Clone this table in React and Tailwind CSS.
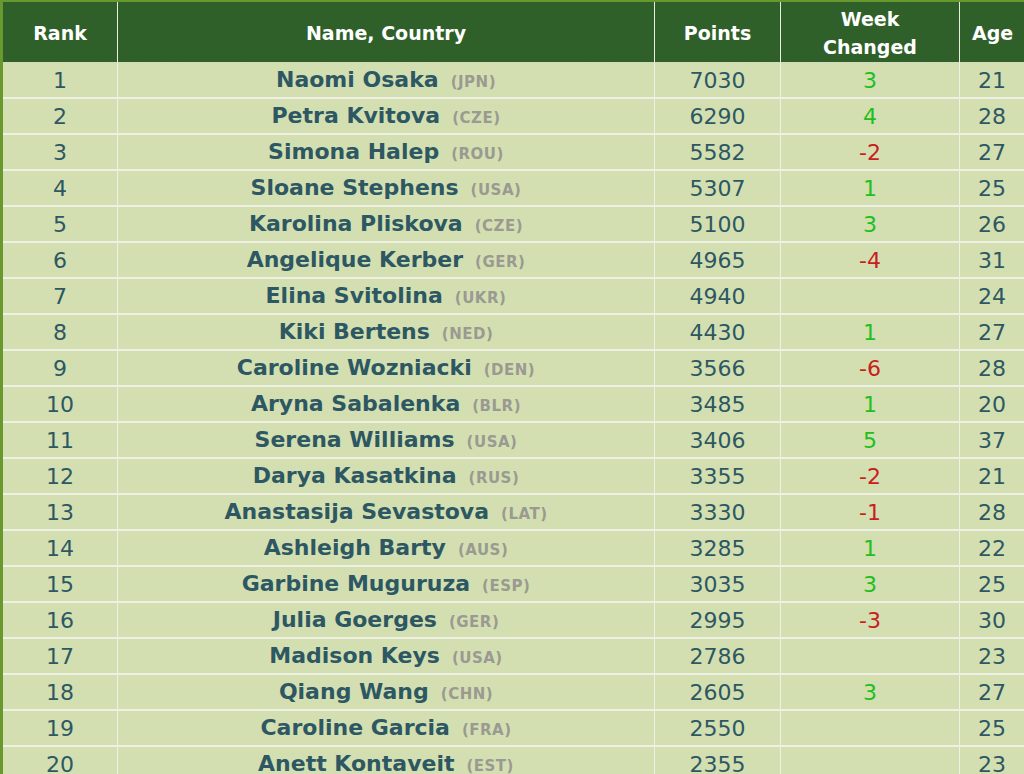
const players = [
  [1, "Naomi Osaka", "JPN", 7030, 3, 21],
  [2, "Petra Kvitova", "CZE", 6290, 4, 28],
  [3, "Simona Halep", "ROU", 5582, -2, 27],
  [4, "Sloane Stephens", "USA", 5307, 1, 25],
  [5, "Karolina Pliskova", "CZE", 5100, 3, 26],
  [6, "Angelique Kerber", "GER", 4965, -4, 31],
  [7, "Elina Svitolina", "UKR", 4940, null, 24],
  [8, "Kiki Bertens", "NED", 4430, 1, 27],
  [9, "Caroline Wozniacki", "DEN", 3566, -6, 28],
  [10, "Aryna Sabalenka", "BLR", 3485, 1, 20],
  [11, "Serena Williams", "USA", 3406, 5, 37],
  [12, "Darya Kasatkina", "RUS", 3355, -2, 21],
  [13, "Anastasija Sevastova", "LAT", 3330, -1, 28],
  [14, "Ashleigh Barty", "AUS", 3285, 1, 22],
  [15, "Garbine Muguruza", "ESP", 3035, 3, 25],
  [16, "Julia Goerges", "GER", 2995, -3, 30],
  [17, "Madison Keys", "USA", 2786, null, 23],
  [18, "Qiang Wang", "CHN", 2605, 3, 27],
  [19, "Caroline Garcia", "FRA", 2550, null, 25],
  [20, "Anett Kontaveit", "EST", 2355, null, 23],
];

export default function App() {
  return (
    <div className="w-[1024px] h-[774px] overflow-hidden bg-[#d3dfb0] font-['DejaVu_Sans',Verdana,sans-serif]">
      <table className="w-[1030px] border-collapse table-fixed border-l-[3px] border-t-[2px] border-[#67992e]">
        <colgroup>
          <col className="w-[116px]" />
          <col className="w-[537px]" />
          <col className="w-[126px]" />
          <col className="w-[179px]" />
          <col className="w-[72px]" />
        </colgroup>
        <thead>
          <tr className="h-[61px] bg-[#30602a] text-white text-[19px] font-bold leading-[28px] border-b border-dashed border-[#cfd8c0]">
            <th className="border-r border-[#e8eee0] font-bold pt-[2px]">Rank</th>
            <th className="border-r border-[#e8eee0] font-bold pt-[2px]">Name, Country</th>
            <th className="border-r border-[#e8eee0] font-bold pt-[2px]">Points</th>
            <th className="border-r border-[#e8eee0] font-bold pt-[2px]">
              Week
              <br />
              Changed
            </th>
            <th className="font-bold text-left pl-[12px] pt-[2px]">Age</th>
          </tr>
        </thead>
        <tbody className="text-[#2d5863]">
          {players.map(([rank, name, country, pts, chg, age]) => (
            <tr key={rank} className="h-[36px] border-b-2 border-[#eef0e4]">
              <td className="border-r border-[#eef0e4] text-center text-[22px] leading-[26px] pt-[2px]">{rank}</td>
              <td className="border-r border-[#eef0e4] text-center leading-[26px] pt-[2px]">
                <span className="text-[22px] font-bold">{name}</span>
                <span className="ml-[12px] text-[15px] font-bold text-[#9a9a92] tracking-[0.5px]">({country})</span>
              </td>
              <td className="border-r border-[#eef0e4] text-center text-[22px] leading-[26px] pt-[2px]">{pts}</td>
              <td
                className={
                  "border-r border-[#eef0e4] text-center text-[22px] leading-[26px] pt-[2px] " +
                  (chg !== null && chg < 0 ? "text-[#c8201c]" : "text-[#20bf20]")
                }
              >
                {chg ?? ""}
              </td>
              <td className="text-left pl-[18px] text-[22px] leading-[26px] pt-[2px]">{age}</td>
            </tr>
          ))}
        </tbody>
      </table>
    </div>
  );
}
